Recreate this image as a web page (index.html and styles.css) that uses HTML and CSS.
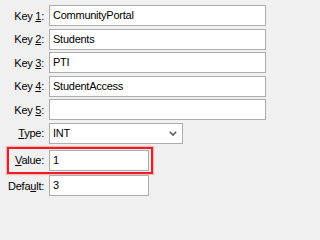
FILE: index.html
```html
<!DOCTYPE html>
<html>
<head>
<meta charset="utf-8">
<link rel="stylesheet" href="styles.css">
</head>
<body>
<div class="form">
  <div class="row"><span class="lbl">Key <u>1</u>:</span><div class="field wide">CommunityPortal</div></div>
  <div class="row"><span class="lbl">Key <u>2</u>:</span><div class="field wide">Students</div></div>
  <div class="row"><span class="lbl">Key <u>3</u>:</span><div class="field wide">PTI</div></div>
  <div class="row"><span class="lbl">Key <u>4</u>:</span><div class="field wide">StudentAccess</div></div>
  <div class="row"><span class="lbl">Key <u>5</u>:</span><div class="field wide"></div></div>
  <div class="row"><span class="lbl"><u>T</u>ype:</span><div class="field combo"><span class="combo-text">INT</span><svg class="chev" width="8" height="5" viewBox="0 0 8 5"><polyline points="0.8,0.8 4,4 7.2,0.8" fill="none" stroke="#5a5a5a" stroke-width="1.6"/></svg></div></div>
  <div class="row highlight"><span class="lbl"><u>V</u>alue:</span><div class="field short">1</div></div>
  <div class="row"><span class="lbl">Defa<u>u</u>lt:</span><div class="field short">3</div></div>
</div>
</body>
</html>
```
FILE: styles.css
```css
html, body {
  margin: 0;
  padding: 0;
  background: #f0f0f0;
}
body {
  font-family: "Liberation Sans", Arial, sans-serif;
  font-size: 11px;
  letter-spacing: -0.25px;
  color: #000;
}
.form {
  display: flex;
  flex-direction: column;
  gap: 2.5px;
  padding-top: 5px;
}
.row {
  display: flex;
  align-items: center;
}
.lbl {
  width: 44px;
  margin-right: 5px;
  text-align: right;
  white-space: nowrap;
}
.lbl u {
  text-decoration-thickness: 1px;
  text-underline-offset: 1px;
}
.field {
  box-sizing: border-box;
  height: 21px;
  border: 1px solid #adadad;
  background: #fff;
  padding: 0 3px;
  line-height: 19px;
  white-space: nowrap;
}
.wide { width: 217px; }
.short { width: 100px; }
.combo {
  width: 134px;
  display: flex;
  align-items: center;
  justify-content: space-between;
  padding-right: 5px;
}
.chev { display: block; }
.highlight {
  margin-left: 7px;
  width: 146px;
  box-sizing: border-box;
  border: 2px solid #ee1c24;
  box-shadow: 0 0 1px 1px rgba(255, 80, 80, 0.35);
  padding: 1px 0;
  margin-top: 0.5px;
  margin-bottom: -1px;
}
.highlight .lbl {
  width: 35px;
}
```
